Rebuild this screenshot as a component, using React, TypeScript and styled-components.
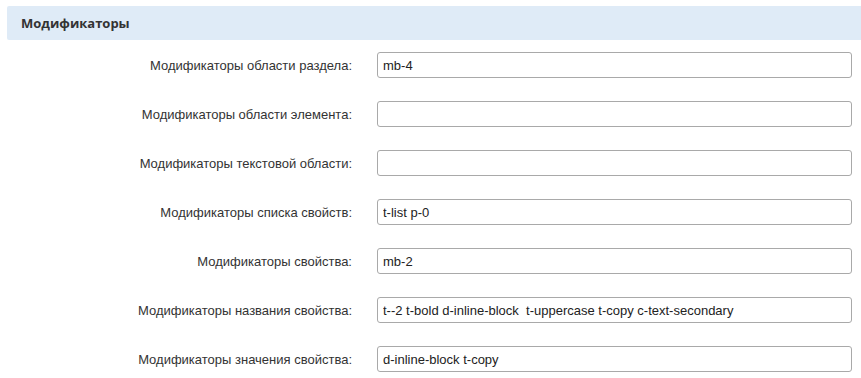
import { Fragment } from "react";
import styled, { createGlobalStyle } from "styled-components";

const GlobalStyle = createGlobalStyle`
    body {
        margin: 0;
        background: #fff;
    }
`;

const Page = styled.div`
    padding: 6px 0 0 7px;
    width: 861px;
    box-sizing: border-box;
`;

const SectionHeader = styled.div`
    height: 34px;
    display: flex;
    align-items: center;
    padding-left: 14px;
    background: #dfebf7;
    border-radius: 2px 0 0 2px;
    font-family: "Open Sans", sans-serif;
    font-size: 13px;
    font-weight: 700;
    color: #333;
`;

const Form = styled.div`
    display: grid;
    grid-template-columns: 345px 1fr;
    column-gap: 25px;
    row-gap: 23px;
    align-items: center;
    padding: 12px 9px 0 0;
`;

const Label = styled.label`
    text-align: right;
    font-family: "Liberation Sans", Arial, sans-serif;
    font-size: 13px;
    color: #333;
`;

const Input = styled.input`
    height: 26px;
    box-sizing: border-box;
    border: 1px solid #a9a9a9;
    border-radius: 3px;
    padding: 0 5px;
    font-family: "Liberation Sans", Arial, sans-serif;
    font-size: 13px;
    color: #222;
    background: #fff;
    outline: none;
`;

const fields = [
    { label: "Модификаторы области раздела:", value: "mb-4" },
    { label: "Модификаторы области элемента:", value: "" },
    { label: "Модификаторы текстовой области:", value: "" },
    { label: "Модификаторы списка свойств:", value: "t-list p-0" },
    { label: "Модификаторы свойства:", value: "mb-2" },
    {
        label: "Модификаторы названия свойства:",
        value: "t--2 t-bold d-inline-block  t-uppercase t-copy c-text-secondary",
    },
    { label: "Модификаторы значения свойства:", value: "d-inline-block t-copy" },
];

const App = () => {
    return (
        <>
            <GlobalStyle />
            <Page>
                <SectionHeader>Модификаторы</SectionHeader>
                <Form>
                    {fields.map((f) => (
                        <Fragment key={f.label}>
                            <Label>{f.label}</Label>
                            <Input defaultValue={f.value} />
                        </Fragment>
                    ))}
                </Form>
            </Page>
        </>
    );
};

export default App;
